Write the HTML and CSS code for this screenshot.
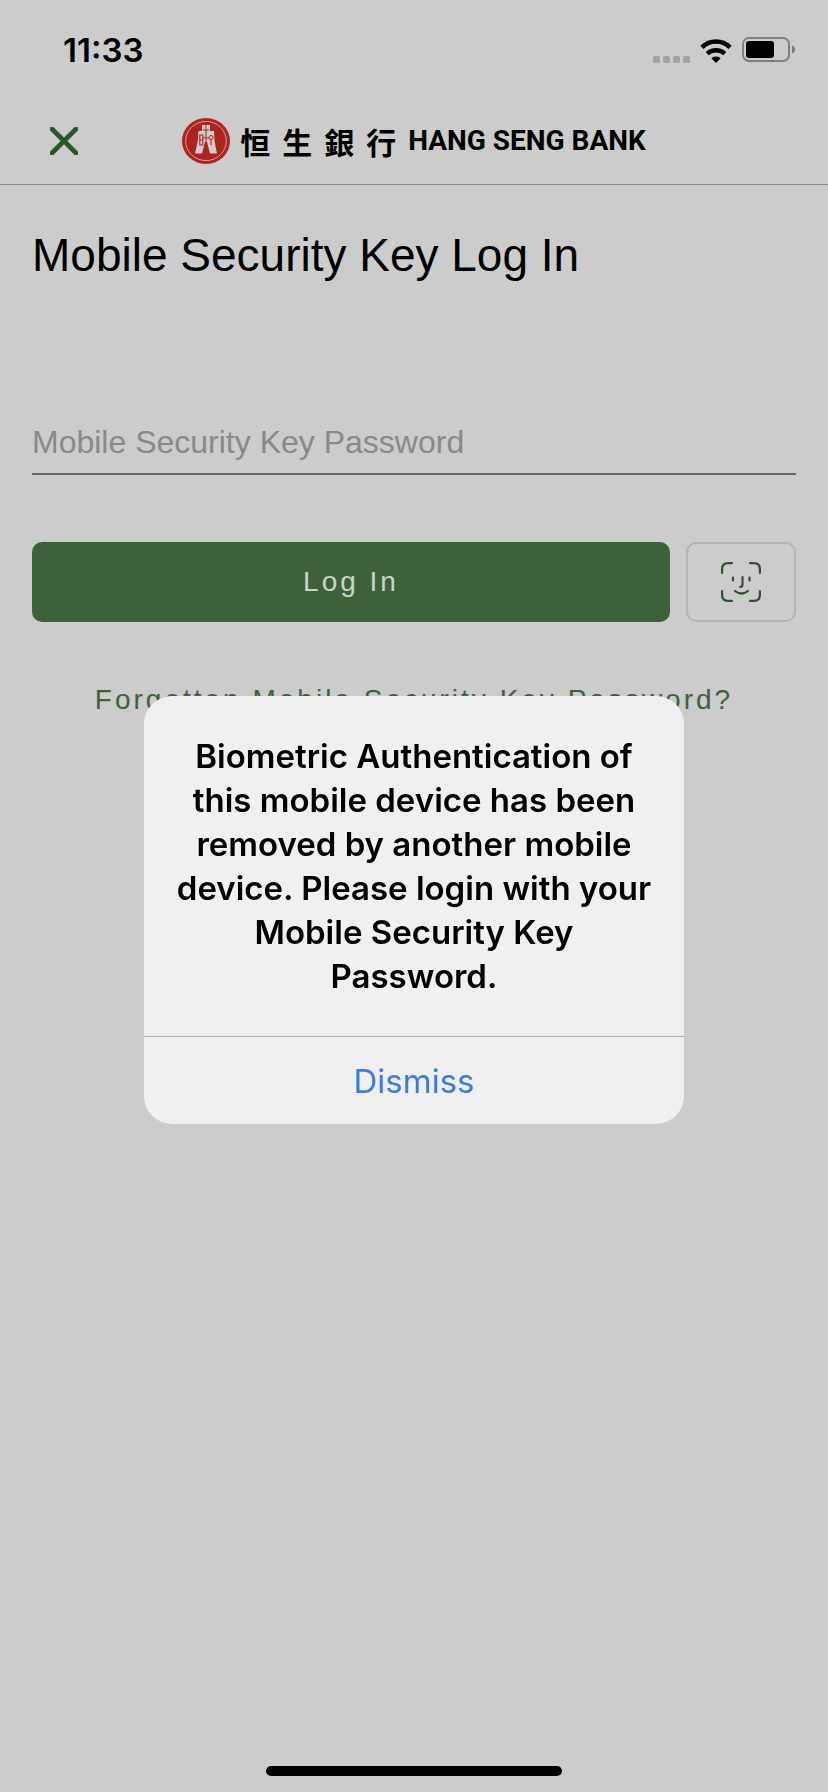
FILE: index.html
```html
<!DOCTYPE html>
<html lang="en">
<head>
<meta charset="utf-8">
<meta name="viewport" content="width=device-width, initial-scale=1">
<title>Mobile Security Key Log In</title>
<link rel="stylesheet" href="styles.css">
</head>
<body>
<div class="status">
  <time class="clock">11:33</time>
  <div class="indicators">
    <svg width="37" height="7" viewBox="0 0 37 7" fill="#a3a3a3" aria-hidden="true"><rect width="7" height="7" rx="1.5"/><rect x="10" width="7" height="7" rx="1.5"/><rect x="20" width="7" height="7" rx="1.5"/><rect x="30" width="7" height="7" rx="1.5"/></svg>
    <svg class="wifi" width="32" height="24" viewBox="0 0 32 24" aria-hidden="true"><path d="M1.900 8.300C10 .6 22 .6 30.100 8.300" fill="none" stroke="#000" stroke-width="4.600"/><path d="M7.200 14.700c5-4.600 12.600-4.600 17.600 0" fill="none" stroke="#000" stroke-width="4.400"/><path d="M11.400 19.300c2.600-2.300 6.600-2.300 9.200 0L16 24z"/></svg>
    <svg width="54" height="26" viewBox="0 0 54 26" aria-hidden="true"><rect x="1" y="1" width="46" height="23" rx="6" fill="none" stroke="#808080" stroke-width="2"/><rect x="4" y="4" width="28" height="17" rx="3"/><path d="M50 8.500c4 1.600 4 6.400 0 8z" fill="#777"/></svg>
  </div>
</div>
<header class="header">
  <button class="close" aria-label="Close"><svg width="28" height="28" viewBox="0 0 28 28"><path d="M2 2l24 24M26 2L2 26" stroke="#27572b" stroke-width="4.600" stroke-linecap="round"/></svg></button>
  <div class="brand">
    <svg width="48" height="46" viewBox="0 0 48 46" aria-hidden="true">
      <ellipse cx="24" cy="23" rx="24" ry="23" fill="#ac2320"/>
      <ellipse cx="24" cy="23" rx="20.300" ry="19.600" fill="none" stroke="#dc9d9b" stroke-width="1"/>
      <path d="M20 7h8v6h4l.5 10 2.500 12.500h-7L25 24h-2l-3 11.500h-7L15.800 23l.7-10H20z" fill="#d5cbcb"/>
      <path d="M24 7v18M21 12h6M21 20h6" stroke="#ac2320" fill="none"/>
      <path d="M17.800 17h3v10h-3zM17.800 22h3M29 21v6" stroke="#ac2320" stroke-width="1.100" fill="none"/><circle cx="29" cy="19.500" r="2" stroke="#ac2320" fill="none"/>
    </svg>
    <span class="brand-zh" lang="zh-Hant">恒生銀行</span>
    <span class="brand-en">HANG SENG BANK</span>
  </div>
</header>
<main class="main">
  <h1 class="title">Mobile Security Key Log In</h1>
  <form class="form">
    <input class="password" type="password" placeholder="Mobile Security Key Password" aria-label="Mobile Security Key Password">
    <div class="actions">
      <button class="login" type="button">Log In</button>
      <button class="face" type="button" aria-label="Log in with Face ID"><svg width="40" height="40" viewBox="0 0 40 40" fill="none" stroke="#2d532d" stroke-width="2.200" stroke-linecap="round"><path d="M1.100 11V7q0-5.900 5.900-5.900h4M29 1.100h4q5.900 0 5.900 5.900v4M38.900 29v4q0 5.900-5.900 5.900h-4M11 38.900H7q-5.900 0-5.900-5.900v-4M12 15.500v3M28.500 15.500v3M21.500 15v7.500q0 2.500-2.500 2.500M14 29q6.500 5 13 0"/></svg></button>
    </div>
  </form>
  <a class="forgot" href="#">Forgotten Mobile Security Key Password?</a>
</main>
<div class="home-bar"></div>
<div class="overlay">
  <div class="alert" role="alertdialog" aria-labelledby="alert-text">
    <p class="alert-text" id="alert-text">Biometric Authentication of this mobile device has been removed by another mobile device. Please login with your Mobile Security Key Password.</p>
    <button class="dismiss" type="button">Dismiss</button>
  </div>
</div>
</body>
</html>
```
FILE: styles.css
```css
* { box-sizing: border-box; }
body {
  margin: 0;
  min-height: 100vh;
  display: flex;
  flex-direction: column;
  background: #ccc;
  color: #000;
  font-family: "Liberation Sans", Arial, sans-serif;
}
button { padding: 0; border: 0; background: none; font: inherit; cursor: pointer; }
svg { display: block; flex: none; }

.status {
  display: flex;
  justify-content: space-between;
  align-items: center;
  height: 100px;
  padding: 0 32px 0 63px;
}
.clock { font: 600 33px/40px Inter, sans-serif; }
.indicators { display: flex; align-items: flex-end; gap: 10px; }

.header {
  display: grid;
  grid-template-columns: 80px 1fr 80px;
  align-items: center;
  height: 85px;
  padding: 0 24px 3px;
  border-bottom: 1px solid #8c8c8c;
}
.close { display: grid; place-items: center; height: 80px; }
.brand { display: flex; align-items: center; justify-content: center; white-space: nowrap; }
.brand-zh {
  margin-left: 10px;
  font: 700 30px/40px "Noto Sans CJK TC", sans-serif;
  letter-spacing: 12px;
}
.brand-en { font: 700 28px/40px Roboto, sans-serif; }

.main { flex: 1; display: flex; flex-direction: column; padding: 40px 32px; }
.title { margin: 0; font: 400 46px/60px "Liberation Sans", Arial, sans-serif; }
.form { margin-top: 124px; }
.password {
  display: block;
  width: 100%;
  height: 66px;
  padding: 2px 0 0;
  border: 0;
  border-bottom: 2px solid #686868;
  border-radius: 0;
  background: none;
  font: 400 32px/40px "Liberation Sans", Arial, sans-serif;
}
.password::placeholder { color: #898989; opacity: 1; }
.actions { display: flex; gap: 16px; margin-top: 67px; }
.login {
  flex: 1;
  height: 80px;
  border-radius: 10px;
  background: #3d6239;
  color: #ccd2cb;
  font-size: 28px;
  letter-spacing: 3px;
}
.face {
  display: grid;
  place-items: center;
  width: 110px;
  height: 80px;
  border: 2px solid #b3b3b3;
  border-radius: 10px;
}
.forgot {
  margin-top: 58px;
  color: #3d6239;
  font-size: 28px;
  line-height: 40px;
  letter-spacing: 3px;
  text-align: center;
  text-decoration: none;
}
.home-bar {
  align-self: center;
  width: 296px;
  height: 10px;
  margin-bottom: 16px;
  border-radius: 5px;
  background: #000;
}

.overlay {
  position: fixed;
  inset: 0;
  display: grid;
  place-items: center;
  padding-top: 28px;
}
.alert {
  width: 540px;
  max-width: 90%;
  border-radius: 28px;
  background: #f0f0f0;
  overflow: hidden;
}
.alert-text {
  margin: 0;
  padding: 38px 28px;
  font: 600 33px/44px Inter, sans-serif;
  text-align: center;
}
.dismiss {
  display: block;
  width: 100%;
  height: 88px;
  border-top: 1px solid #b0b0b0;
  color: #3d7be4;
  font: 400 33px/44px Inter, sans-serif;
}
```
